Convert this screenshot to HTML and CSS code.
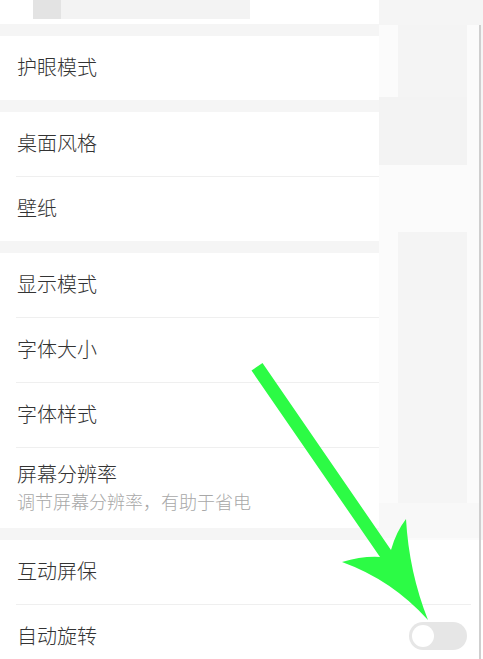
FILE: index.html
```html
<!DOCTYPE html>
<html>
<head>
  <meta charset="utf-8"/>
  <title>设置</title>
  <link rel="stylesheet" href="styles.css">
</head>
<body>
  <div class="screen">
    <div class="upper">
      <div class="list">
        <div class="top-strip">
          <span class="tab tab-dark"></span>
          <span class="tab tab-light"></span>
        </div>

        <div class="group">
          <div class="row">护眼模式</div>
        </div>

        <div class="group">
          <div class="row">桌面风格</div>
          <div class="row">壁纸</div>
        </div>

        <div class="group">
          <div class="row">显示模式</div>
          <div class="row">字体大小</div>
          <div class="row">字体样式</div>
          <div class="row row-tall">
            <div class="row-title">屏幕分辨率</div>
            <div class="row-sub">调节屏幕分辨率，有助于省电</div>
          </div>
        </div>
      </div>

      <div class="side">
        <div class="blk blk-a"></div>
        <div class="blk blk-b"></div>
        <div class="blk blk-c"></div>
        <div class="blk blk-d"></div>
        <div class="blk blk-e"></div>
        <div class="blk blk-f"></div>
      </div>
    </div>

    <div class="group group-wide">
      <div class="row">互动屏保</div>
      <div class="row row-switch">
        <span>自动旋转</span>
        <span class="switch"><span class="knob"></span></span>
      </div>
    </div>
  </div>

  <!-- hand-drawn pointer over the screenshot -->
  <svg class="arrow" width="483" height="659" viewBox="0 0 483 659">
    <path d="M251.5 370.5 L262.5 363 L391 550 Q396 532 406 519 Q409 572 428 620 Q392 580 342 562 Q362 556 380 557 Z" fill="#2cfb45"/>
  </svg>
</body>
</html>
```

FILE: styles.css
```css
html, body {
  margin: 0;
  padding: 0;
  background: #fff;
}

body {
  font-family: "Noto Sans CJK SC", "Noto Sans", sans-serif;
  font-weight: 300;
  color: #333;
  position: relative;
  width: 483px;
  height: 659px;
  overflow: hidden;
}

.screen {
  display: flex;
  flex-direction: column;
  width: 483px;
}

.upper {
  display: flex;
  background: #f5f5f5;
}

.list {
  width: 379px;
  display: flex;
  flex-direction: column;
  gap: 12px;
  padding-bottom: 12px;
}

.top-strip {
  height: 24px;
  background: #fff;
  display: flex;
  padding-left: 33px;
}

.tab {
  display: block;
  height: 19px;
}

.tab-dark {
  width: 28px;
  background: #e3e3e3;
}

.tab-light {
  width: 189px;
  background: #f3f3f3;
}

.group {
  background: #fff;
}

.row {
  height: 64px;
  margin-left: 16px;
  padding-left: 1px;
  padding-bottom: 3px;
  box-sizing: border-box;
  font-size: 20px;
  display: flex;
  align-items: center;
  border-top: 1px solid #efefef;
}

.row:first-child {
  height: 64px;
  border-top: none;
}

.row + .row {
  height: 65px;
}

.row-tall.row {
  height: 81px;
  padding-bottom: 0;
  flex-direction: column;
  align-items: flex-start;
  justify-content: center;
}

.row-title {
  line-height: 28px;
  margin-top: -2px;
}

.row-sub {
  font-size: 18px;
  color: #a8a8a8;
  line-height: 26px;
}

.side {
  flex: 1;
  display: flex;
  flex-direction: column;
  background: #fbfbfb;
  border-right: 2px solid #cfcfcf;
  margin-right: 2px;
  margin-top: 25px;
}

.blk {
  background: #f4f4f4;
  margin-left: 19px;
  margin-right: 12px;
}

.blk-a { height: 72px; }
.blk-b { height: 68px; margin-left: 0; background: #f3f3f3; }
.blk-c { height: 67px; background: #fbfbfb; }
.blk-d { height: 68px; }
.blk-e { height: 203px; background: #f5f5f5; }
.blk-f { height: 35px; margin-left: 0; margin-right: 0; background: #f8f8f8; }

.group-wide {
  width: 479px;
  border-right: 2px solid #cfcfcf;
}

.group-wide .row {
  margin-right: 8px;
}

.group-wide .row-switch {
  justify-content: space-between;
  height: 65px;
  padding-bottom: 3px;
}

.switch {
  width: 58px;
  height: 28px;
  border-radius: 14px;
  background: #e6e6e6;
  display: flex;
  align-items: center;
  padding-left: 3px;
  box-sizing: border-box;
  margin-right: 4px;
}

.knob {
  width: 22px;
  height: 22px;
  border-radius: 50%;
  background: #fff;
}

.arrow {
  position: absolute;
  left: 0;
  top: 0;
}
```
